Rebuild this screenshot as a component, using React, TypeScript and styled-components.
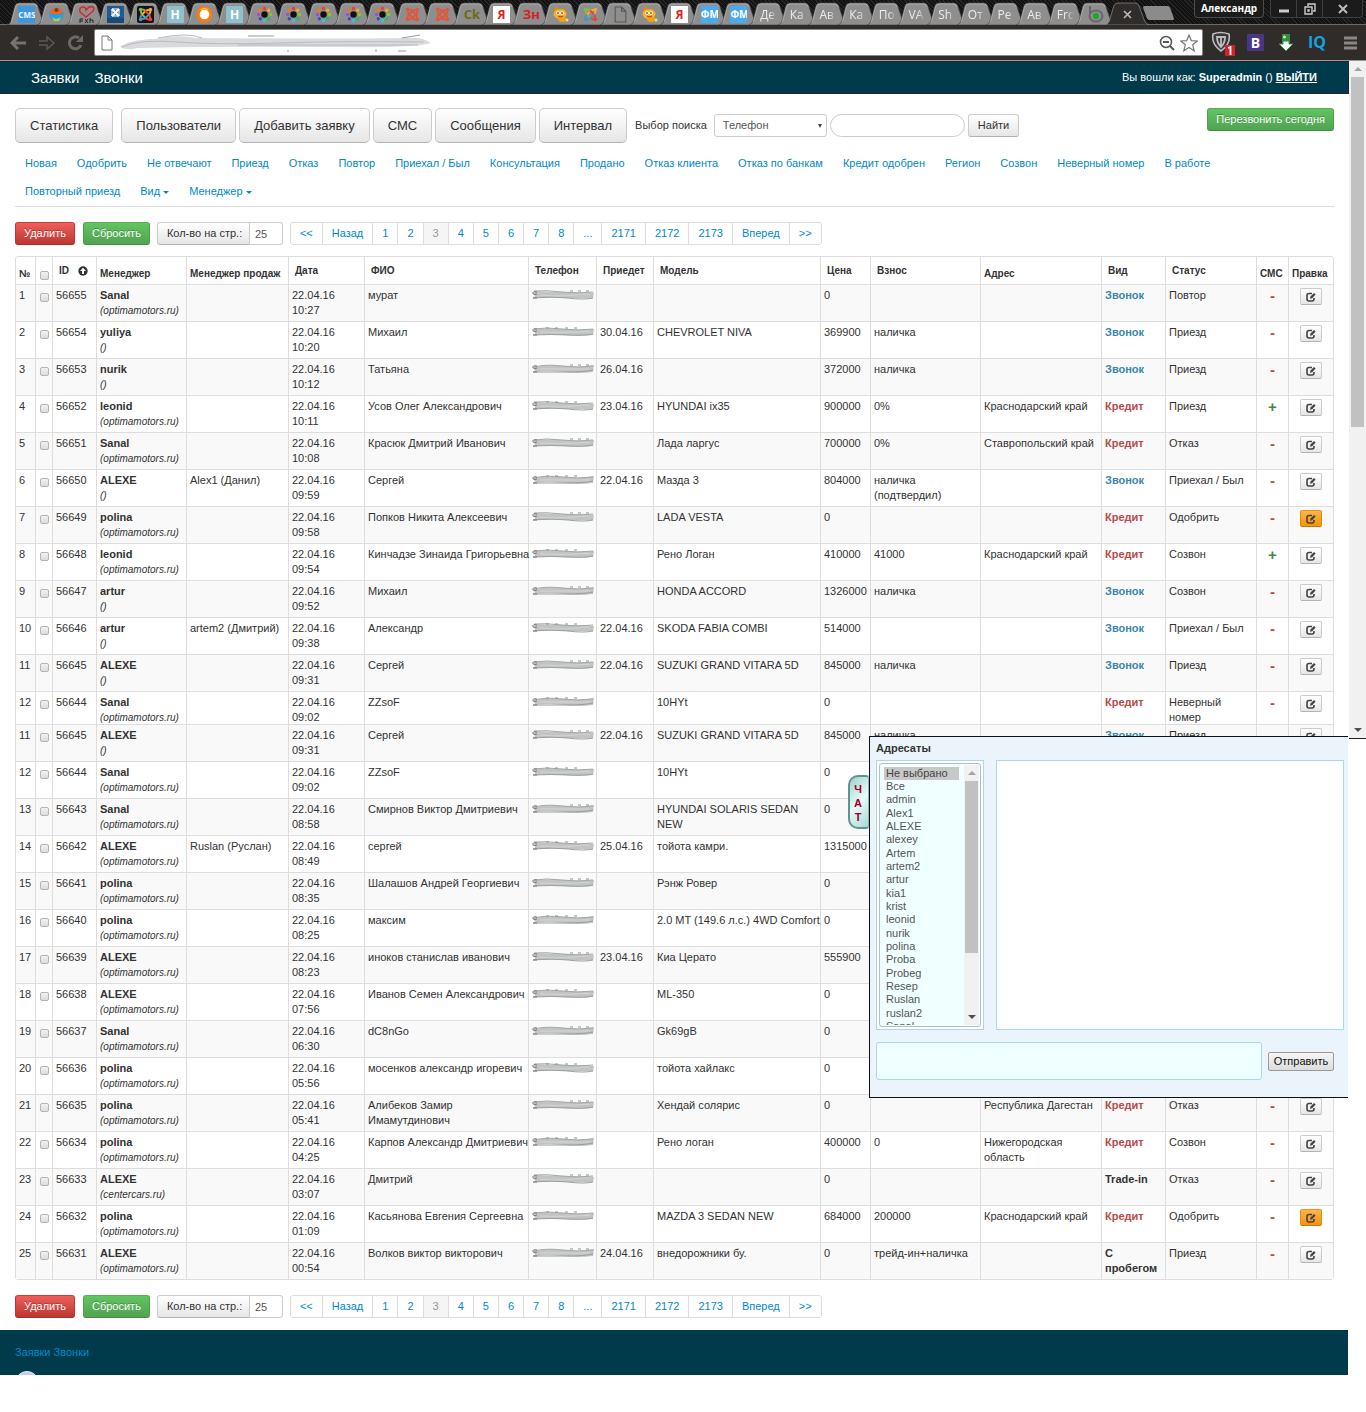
import React from "react";
import styled, { createGlobalStyle, css } from "styled-components";

const GlobalStyle = createGlobalStyle`
  *, *::before, *::after { box-sizing: border-box; }
  html, body { margin: 0; background: #fff; }
  body, button, input, select, textarea {
    font-family: "Liberation Sans", Arial, sans-serif;
    font-size: 11px;
    line-height: 15px;
    color: #333;
  }
  a { color: #0088cc; text-decoration: none; }
`;

/* ---------- browser frame ---------- */

const Browser = styled.header`
  background: #302c2a;
  border-bottom: 1px solid #9a9a9a;
`;

const TabStrip = styled.div`
  display: flex;
  height: 25px;
  padding: 0 3px 0 12px;
  background: repeating-linear-gradient(45deg, #121212 0 2px, #262626 2px 3px);
  border-bottom: 1px solid #6d6a68;
`;

const TabList = styled.div`
  display: flex;
  flex: 1;
  min-width: 0;
`;

const Tab = styled.button`
  position: relative;
  flex: 1 1 0;
  min-width: 0;
  height: 25px;
  padding: 3px 0 0;
  border: 0;
  background: none;
  display: flex;
  align-items: center;
  justify-content: center;
`;

const TabShape = styled.svg`
  position: absolute;
  top: 2px;
  left: -5px;
  width: calc(100% + 10px);
  height: 23px;
`;

const TabFace = styled.span`
  position: relative;
  display: flex;
  justify-content: center;
  width: 17px;
  height: 17px;
  overflow: hidden;
  svg { width: 17px; height: 17px; }
`;

const TabText = styled.span<{ $color?: string; $bg?: string; $size?: number; $fade?: boolean }>`
  width: 17px;
  text-align: ${(p) => (p.$fade ? "left" : "center")};
  white-space: nowrap;
  font: ${(p) => (p.$fade ? "normal" : "bold")} ${(p) => p.$size ?? 12}px/17px "Open Sans", "Noto Sans", sans-serif;
  color: ${(p) => p.$color ?? "#ececec"};
  background: ${(p) => p.$bg ?? "transparent"};
  ${(p) => p.$fade && css`mask-image: linear-gradient(90deg, #000 60%, transparent);`}
`;

const WindowBar = styled.div`
  display: flex;
  align-items: flex-start;
  flex: none;
`;

const ActiveTab = styled(Tab)`
  flex: none;
  width: 34px;
`;

const NewTab = styled.button`
  width: 27px;
  height: 14px;
  margin: 6px 22px 0 1px;
  border: 0;
  background: #8b8b8b;
  border-radius: 2px;
  transform: skewX(20deg);
`;

const UserButton = styled.button`
  width: 70px;
  height: 18px;
  padding: 0;
  border: 1px solid #4b4b4b;
  border-top: 0;
  border-radius: 0 0 4px 4px;
  background: #1b1b1b;
  color: #fff;
  font: bold 10px/17px "Open Sans", "Noto Sans", sans-serif;
`;

const WindowControls = styled.div`
  display: flex;
  margin-left: 6px;
  border: 1px solid #3f3f3f;
  border-top: 0;
  border-radius: 0 0 4px 4px;
  background: #1b1b1b;
`;

const WindowButton = styled.button<{ $w: number }>`
  display: flex;
  align-items: center;
  justify-content: center;
  width: ${(p) => p.$w}px;
  height: 17px;
  padding: 0;
  border: 0;
  background: none;
  & + & { border-left: 1px solid #3f3f3f; }
`;

const AddressBar = styled.div`
  display: flex;
  align-items: center;
  height: 35px;
  padding: 0 5px 0 8px;
`;

const BarIcons = styled.div<{ $gap: number }>`
  display: flex;
  align-items: center;
  gap: ${(p) => p.$gap}px;
`;

const IconButton = styled.button`
  display: flex;
  padding: 0;
  border: 0;
  background: none;
`;

const Omnibox = styled.div`
  display: flex;
  align-items: center;
  flex: 1;
  height: 27px;
  margin: 0 8px;
  padding: 0 4px 0 6px;
  gap: 5px;
  background: #fff;
  border: 1px solid #888;
  border-radius: 2px;
`;

const UrlWrap = styled.div`
  display: flex;
  align-items: center;
  flex: 1;
`;

/* ---------- page ---------- */

const Viewport = styled.div`
  display: flex;
  align-items: flex-start;
`;

const Page = styled.div`
  position: relative;
  flex: 1;
  min-width: 0;
`;

const Navbar = styled.nav`
  display: flex;
  align-items: center;
  height: 33px;
  padding: 0 31px;
  gap: 15px;
  background: #003b4b;
  border: 1px solid #252525;
  border-width: 1px 1px 1px 0;
  a { color: #fff; font-size: 15px; line-height: 20px; }
`;

const Login = styled.p`
  margin: 0 0 0 auto;
  color: #fff;
  a { font-size: 11px; font-weight: bold; line-height: 15px; text-decoration: underline; }
`;

const Content = styled.main`
  padding: 14px 15px 1px;
`;

const TopBar = styled.div`
  display: flex;
  align-items: center;
  height: 35px;
`;

const tones = {
  plain: css`
    color: #333;
    border-color: #ccc #ccc #b3b3b3;
    background: linear-gradient(#fff, #e6e6e6);
  `,
  red: css`
    color: #fff;
    border-color: #c9403a #b93a34 #a32f2a;
    background: linear-gradient(#ee5f5b, #bd362f);
    text-shadow: 0 -1px 0 rgba(0, 0, 0, 0.25);
  `,
  green: css`
    color: #fff;
    border-color: #55ad55 #4da04d #3f8f3f;
    background: linear-gradient(#62c462, #51a351);
    text-shadow: 0 -1px 0 rgba(0, 0, 0, 0.25);
  `,
  orange: css`
    color: #333;
    border-color: #e8961c #e08a10 #c87a08;
    background: linear-gradient(#fbb450, #f89406);
  `,
};

const Button = styled.button<{ $tone?: keyof typeof tones }>`
  height: 23px;
  padding: 0 8px;
  border: 1px solid;
  border-radius: 3px;
  white-space: nowrap;
  ${(p) => tones[p.$tone ?? "plain"]}
`;

const LargeButton = styled(Button)`
  height: 35px;
  padding: 0 14px;
  margin-right: 3px;
  border-radius: 5px;
  font-size: 13px;
  line-height: 20px;
  &:first-child { margin-right: 8px; }
`;

const SearchForm = styled.form`
  display: flex;
  align-items: center;
  gap: 3px;
  margin-left: 5px;
  label { margin-right: 4px; white-space: nowrap; }
  button { padding: 0 9px; }
`;

const SelectWrap = styled.span`
  position: relative;
  display: flex;
  &::after {
    content: "";
    position: absolute;
    top: 10px;
    right: 5px;
    border: 2px solid transparent;
    border-top: 4px solid #444;
    border-bottom: 0;
    pointer-events: none;
  }
`;

const Select = styled.select`
  appearance: none;
  width: 113px;
  height: 23px;
  padding: 0 8px;
  border: 1px solid #ccc;
  border-radius: 3px;
  background: #fff;
  color: #555;
`;

const SearchInput = styled.input`
  width: 135px;
  height: 23px;
  padding: 0 10px;
  border: 1px solid #ccc;
  border-radius: 12px;
  background: #fff;
`;

const CallToday = styled(Button)`
  align-self: flex-start;
  margin-left: auto;
`;

const Filters = styled.ul`
  display: flex;
  flex-wrap: wrap;
  margin: 6px 0 0;
  padding: 0 80px 1px 0;
  list-style: none;
  border-bottom: 1px solid #ddd;
  a { display: block; padding: 0 10px; line-height: 28px; }
`;

const Caret = styled.i`
  display: inline-block;
  margin-left: 3px;
  vertical-align: middle;
  border: 3px solid transparent;
  border-top-color: #0088cc;
  border-bottom: 0;
`;

const Tools = styled.div`
  display: flex;
  align-items: center;
  height: 23px;
  margin: 15px 0 11px;
`;

const ToolGroup = styled.div`
  display: flex;
  gap: 8px;
`;

const PerPage = styled.div`
  display: flex;
  margin: 0 7px;
  label {
    display: block;
    width: 93px;
    height: 23px;
    padding-left: 9px;
    line-height: 21px;
    white-space: nowrap;
    border: 1px solid;
    border-radius: 3px 0 0 3px;
    ${tones.plain}
  }
  input {
    width: 33px;
    height: 23px;
    padding: 0 5px;
    border: 1px solid #ccc;
    border-left: 0;
    border-radius: 0 3px 3px 0;
    color: #555;
  }
`;

const Pager = styled.ul`
  display: flex;
  margin: 0;
  padding: 0;
  list-style: none;
  border: 1px solid #ddd;
  border-radius: 3px;
  li + li { border-left: 1px solid #ddd; }
`;

const PageLink = styled.a<{ $active?: boolean }>`
  display: block;
  padding: 0 9px;
  line-height: 21px;
  ${(p) => p.$active && css`color: #999; background: #f5f5f5;`}
`;

/* ---------- table ---------- */

const Grid = styled.table`
  width: 100%;
  table-layout: fixed;
  border: 1px solid #ddd;
  border-radius: 3px;
  border-spacing: 0;
  th, td { padding: 3px 0 3px 3px; vertical-align: top; text-align: left; }
  th + th, td + td { border-left: 1px solid #ddd; }
  th { vertical-align: bottom; white-space: nowrap; font-size: 10px; }
  th a { display: block; padding: 3px; color: #333; }
  td { border-top: 1px solid #ddd; }
  em { font-size: 10px; }
  tbody tr:nth-child(odd) { background: #f9f9f9; }
`;

const Col = styled.col<{ $w?: number }>`
  width: ${(p) => (p.$w ? `${p.$w}px` : "auto")};
`;

const Row = styled.tr<{ $cut: boolean }>`
  ${(p) => p.$cut && css`
    && td { padding-bottom: 0; }
    td > div { height: 29px; overflow: hidden; }
  `}
`;

const Cell = styled.div<{ $center?: boolean }>`
  ${(p) => p.$center && css`text-align: center; margin-left: -3px;`}
`;

const Name = styled.span`
  white-space: pre;
`;

const Check = styled.input.attrs({ type: "checkbox" })`
  appearance: none;
  display: block;
  width: 9px;
  height: 9px;
  margin: 5px 0 0 1px;
  border: 1px solid #b4b4b4;
  border-radius: 2px;
  background: linear-gradient(#f2f2f2, #dcdcdc);
`;

const HeadCheck = styled(Check)`
  margin: 0 0 1px 1px;
`;

const SortLabel = styled.span`
  display: flex;
  align-items: center;
  gap: 9px;
`;

const Kind = styled.strong<{ $kind: string }>`
  color: ${(p) => (p.$kind === "Звонок" ? "#3a87ad" : p.$kind === "Кредит" ? "#b94a48" : "#333")};
`;

const Sms = styled.strong<{ $sent: boolean }>`
  font-size: 15px;
  color: ${(p) => (p.$sent ? "#468847" : "#b94a48")};
`;

const EditButton = styled(Button)`
  display: inline-flex;
  align-items: center;
  justify-content: center;
  width: 22px;
  height: 17px;
  padding: 0;
  border-radius: 2px;
  vertical-align: top;
`;

/* ---------- chat ---------- */

const Chat = styled.section`
  position: absolute;
  top: 675px;
  right: 1px;
  width: 479px;
  height: 362px;
  padding: 4px 4px 0 6px;
  background: #ebf3fb;
  border: 1px solid #111;
  border-right: 0;
`;

const ChatTitle = styled.label`
  display: block;
  font-weight: bold;
`;

const ChatBody = styled.div`
  display: flex;
  gap: 12px;
  height: 270px;
  margin-top: 4px;
`;

const Recipients = styled.div`
  width: 108px;
  padding: 2px;
  border: 1px solid #a8d8ea;
  background: #fff;
`;

const RecipientBox = styled.div`
  display: flex;
  height: 264px;
  padding: 1px;
  border: 1px solid #bbb;
  border-radius: 3px;
  background: #f0ffff;
`;

const RecipientList = styled.select`
  appearance: none;
  flex: 1;
  min-width: 0;
  height: 260px;
  padding: 2px 5px 0 3px;
  border: 0;
  outline: 0;
  background: #f0ffff;
  color: #555;
  overflow: hidden;
  scrollbar-width: none;
  option { min-height: 13px; padding: 0 2px; color: #555; }
  option:nth-child(3n) { min-height: 14px; }
  option:checked { color: #444; background: #c8c8c8; }
`;

const Messages = styled.div`
  flex: 1;
  border: 1px solid #a8d8ea;
  background: #fff;
`;

const Compose = styled.div`
  display: flex;
  align-items: center;
  gap: 6px;
  margin: 12px 10px 0 0;
  textarea {
    flex: 1;
    height: 38px;
    border: 1px solid #a8d8ea;
    border-radius: 3px;
    background: #f0ffff;
    resize: none;
  }
`;

const Send = styled.button`
  width: 66px;
  height: 19px;
  padding: 0;
  border: 1px solid #9a9a9a;
  border-radius: 2px;
  background: linear-gradient(#f6f6f6, #dcdcdc);
  color: #111;
`;

const ChatHandle = styled.button`
  position: absolute;
  top: 714px;
  right: 480px;
  width: 21px;
  height: 54px;
  padding: 2px 2px 0 0;
  border: 2px solid #5f9591;
  border-right: 1px solid #8fb8b5;
  border-radius: 10px 3px 3px 10px;
  background: linear-gradient(135deg, #9fd0cc, #e8fbfa 50%, #a9d8d4);
  color: #a00020;
  font-weight: bold;
  line-height: 14px;
  span { display: block; }
`;

/* ---------- scrollbars, footer ---------- */

const Scrollbar = styled.div<{ $w: number; $h: number }>`
  display: flex;
  flex-direction: column;
  align-items: center;
  flex: none;
  width: ${(p) => p.$w}px;
  height: ${(p) => p.$h}px;
  background: #f1f1f1;
`;

const PageScrollbar = styled(Scrollbar)`
  border-bottom: 1px solid #222;
`;

const Arrow = styled.i<{ $up?: boolean }>`
  margin: 6px 0;
  border: 4px solid transparent;
  ${(p) => (p.$up ? css`border-bottom-color: #a3a3a3; border-top: 0;` : css`border-top-color: #505050; border-bottom: 0; margin-top: auto;`)}
`;

const Thumb = styled.div<{ $h: number }>`
  width: 13px;
  height: ${(p) => p.$h}px;
  background: #c1c1c1;
`;

const Footer = styled.footer`
  height: 45px;
  margin-right: 1px;
  padding: 15px 15px 0;
  background: #003b4b;
  overflow: hidden;
`;

const Counter = styled.div`
  width: 24px;
  height: 24px;
  margin-top: 11px;
  border-radius: 12px;
  background: #c3cfe4;
  border: 1px solid #e8eef8;
`;

/* ---------- drawings ---------- */

const SmudgeArt = styled.svg`
  display: block;
  margin-top: 1px;
`;

const Smudge = ({ n }: { n: number }) => {
  const shift = (n % 3) - 1;
  return (
    <SmudgeArt width="63" height="12" viewBox="0 0 63 12">
      <path d={`M2 ${3 + shift} Q18 ${2 - shift} 34 3 T62 ${3 - shift} L61 9 Q46 ${10 + shift} 30 9 T3 9 Z`} fill="#c2c4c4" />
      <path d={`M2 ${3 + shift} Q14 1 30 3 T61 3`} fill="none" stroke="#a4a7a7" />
      <path d={`M1 9 Q20 ${8 + shift} 36 9 T61 ${8 - shift}`} fill="none" stroke="#9a9e9e" />
      <path d={`M8 6 Q28 ${7 - shift} 42 6 T58 6`} fill="none" stroke="#d4d6d6" />
      <path d="M5 3 Q0 2 1 5 Q3 6 5 5 M1 9 H5" fill="none" stroke="#777" />
      <path d={n % 2 ? "M14 2 H17 M23 2 H26 M33 2 H36 M42 2 H45" : "M38 2 H41 M46 2 H49 M54 2 H57"} stroke="#909393" />
    </SmudgeArt>
  );
};

const EditIcon = () => (
  <svg width="10" height="10" viewBox="0 0 10 10" fill="none">
    <path d="M6 1.5H3Q1 1.5 1 3.5V7Q1 9 3 9H6Q8 9 8 7V6" stroke="#444" strokeWidth="1.6" />
    <path d="M4 6.8L4.5 4.6L8 1L9.6 2.5L6.2 6.2Z" fill="#444" />
  </svg>
);

const SortIcon = () => (
  <svg width="10" height="10" viewBox="0 0 10 10">
    <circle cx="5" cy="5" r="4.7" fill="#333" />
    <path d="M5 1.7L8 5H6V8H4V5H2Z" fill="#fff" />
  </svg>
);

const Spinner = () => (
  <svg viewBox="0 0 17 17">
    {["#f33", "#fa2", "#8c2", "#2b6", "#2cd", "#44c", "#a4d", "#f70"].map((c, i) => (
      <rect key={c} x="7" y="1" width="3" height="3" rx="1" fill={c} transform={`rotate(${i * 45} 8.5 8.5)`} />
    ))}
    <circle cx="8.5" cy="8.5" r="3.2" fill="#111" />
  </svg>
);

const Joomla = ({ colors, bg }: { colors: string[]; bg?: string }) => (
  <svg viewBox="0 0 17 17">
    {bg && <rect width="17" height="17" rx="2" fill={bg} />}
    {[0, 1, 2, 3].map((i) => (
      <g key={i} transform={`rotate(${i * 90} 8.5 8.5)`} stroke={colors[i]} fill={colors[i]}>
        <circle cx="3.6" cy="3.6" r="1.8" stroke="none" />
        <path d="M4 4V6Q4 7.5 5.5 9L9 12.5M5 3.6Q7 3.4 8.5 5" fill="none" strokeWidth="2" />
      </g>
    ))}
  </svg>
);

const JoomlaBlue = () => (
  <svg viewBox="0 0 17 17">
    <rect width="17" height="17" fill="#1d5b94" />
    <rect y="12" width="17" height="5" fill="#174a79" />
    <path d="M5 3L12 10M12 3L5 10" stroke="#fff" strokeWidth="2.4" />
    <path d="M5 3H12V10H5Z" fill="none" stroke="#fff" />
  </svg>
);

const Ball = () => (
  <svg viewBox="0 0 17 17">
    <circle cx="8.5" cy="8" r="6.5" fill="#e8652c" />
    <path d="M1 6Q5 9 8.5 8Q13 9 16 6L15 12Q8 18 2 12Z" fill="#2f9bd8" />
    <path d="M4 11Q8 15 13 11L11 15H6Z" fill="#a8d35a" />
    <circle cx="8.5" cy="4" r="2" fill="#7d3a1a" />
  </svg>
);

const Heart = () => (
  <svg viewBox="0 0 17 17">
    <path d="M8 11L2 6Q1 1 5 1Q8 1 8 4Q11 0 15 1Q17 3 14 6Z" fill="none" stroke="#e0202a" strokeWidth="1.4" />
    <path d="M2 13H5M2 15H5M2 13V17M7 13L10 17M10 13L7 17M12 12V17M12 14H15V17" stroke="#222" fill="none" />
  </svg>
);

const Ring = () => (
  <svg viewBox="0 0 17 17">
    <circle cx="8.5" cy="8.5" r="6.4" fill="#fff" stroke="#ff7a0a" strokeWidth="3.2" />
    <path d="M5 4Q8 1 12 4" stroke="#ffc02a" strokeWidth="1.5" fill="none" />
  </svg>
);

const Cat = () => (
  <svg viewBox="0 0 17 17">
    <path d="M2 5L4 0L8 4Z M9 4L12 2L13 6Z" fill="#e58a16" />
    <ellipse cx="8" cy="8" rx="6.5" ry="4.8" fill="#f9b424" />
    <ellipse cx="10" cy="13" rx="4" ry="3" fill="#f3a11b" />
    <circle cx="6" cy="7" r="1.8" fill="#fff" />
    <circle cx="10" cy="7" r="1.8" fill="#fff" />
    <circle cx="6" cy="7" r="0.8" />
    <circle cx="10" cy="7" r="0.8" />
    <path d="M6 10Q8 12 11 10" stroke="#a33" fill="none" />
    <circle cx="15" cy="14" r="1.5" fill="#ffe14a" />
  </svg>
);

const SheetIcon = ({ dark }: { dark?: boolean }) => (
  <svg width="12" height="16" viewBox="0 0 12 16">
    <path d="M1 1H7L11 5V15H1Z M7 1V5H11" fill={dark ? "none" : "#fff"} stroke={dark ? "#555" : "#777"} />
  </svg>
);

const Bo = () => (
  <svg viewBox="0 0 17 17">
    <path d="M3 0V8" stroke="#6b5f72" strokeWidth="2" />
    <ellipse cx="9" cy="10" rx="6.5" ry="5.5" fill="none" stroke="#6b6570" strokeWidth="2" />
    <circle cx="9" cy="10" r="3" fill="#14b01a" />
  </svg>
);

const Shape = ({ active }: { active?: boolean }) => (
  <TabShape viewBox="0 0 40 23" preserveAspectRatio="none">
    <path
      d="M0 23Q3 22 4 19L8 4Q9 1 12 1H27Q30 1 31 4L36 19Q37 22 40 23Z"
      fill={active ? "#302c2a" : "#8e8e8e"}
      stroke={active ? "#8a8a8a" : "#4a4a4a"}
      strokeWidth="0.7"
    />
    {!active && <path d="M4.500 20L8.500 5Q9.500 2 12 2H27Q29.500 2 30.500 5" fill="none" stroke="#b2b2b2" strokeWidth="0.8" />}
  </TabShape>
);

const orange = ["#e2573a", "#e2573a", "#e2573a", "#e2573a"];
const multi = ["#7ac143", "#f9a541", "#f44321", "#5091cd"];

const tabFaces: React.ReactNode[] = [
  <TabText $color="#e9f5ff" $bg="#3e97dc" $size={8}>CMS</TabText>,
  <Ball />,
  <Heart />,
  <JoomlaBlue />,
  <Joomla colors={multi} bg="#151515" />,
  <TabText $color="#fff" $bg="#8fc0d0">H</TabText>,
  <Ring />,
  <TabText $color="#fff" $bg="#8fc0d0">H</TabText>,
  <Spinner />, <Spinner />, <Spinner />, <Spinner />, <Spinner />,
  <Joomla colors={orange} />,
  <Joomla colors={orange} />,
  <TabText $color="#6e6b17" $size={13}>Ck</TabText>,
  <TabText $color="#e02020" $bg="#fff">Я</TabText>,
  <TabText $color="#d81e1e" $size={13}>Зн</TabText>,
  <Cat />,
  <Joomla colors={multi} />,
  <SheetIcon dark />,
  <Cat />,
  <TabText $color="#e02020" $bg="#fff">Я</TabText>,
  <TabText $color="#fff" $bg="#4aaaf0" $size={10}>ФМ</TabText>,
  <TabText $color="#fff" $bg="#4aaaf0" $size={10}>ФМ</TabText>,
  ...["Де", "Ка", "Ав", "Ка", "По", "VA", "Sh", "От", "Ре", "Ав", "Fro"].map((t) => <TabText $fade>{t}</TabText>),
  <Bo />,
];

/* ---------- data ---------- */

type Lead = [number, string, string, string, string, string, string, string, string, string, string, string, string, string, string];
// №, менеджер, сайт, менеджер продаж, время, ФИО, приедет, модель, цена, взнос, адрес, вид, статус, смс, правка
const O = "optimamotors.ru";
const leads: Lead[] = [
  [1, "Sanal", O, "", "10:27", "мурат", "", "", "0", "", "", "Звонок", "Повтор", "-", ""],
  [2, "yuliya", "", "", "10:20", "Михаил", "30.04.16", "CHEVROLET NIVA", "369900", "наличка", "", "Звонок", "Приезд", "-", ""],
  [3, "nurik", "", "", "10:12", "Татьяна", "26.04.16", "", "372000", "наличка", "", "Звонок", "Приезд", "-", ""],
  [4, "leonid", O, "", "10:11", "Усов Олег Александрович", "23.04.16", "HYUNDAI ix35", "900000", "0%", "Краснодарский край", "Кредит", "Приезд", "+", ""],
  [5, "Sanal", O, "", "10:08", "Красюк Дмитрий Иванович", "", "Лада ларгус", "700000", "0%", "Ставропольский край", "Кредит", "Отказ", "-", ""],
  [6, "ALEXE", "", "Alex1 (Данил)", "09:59", "Сергей", "22.04.16", "Мазда 3", "804000", "наличка (подтвердил)", "", "Звонок", "Приехал / Был", "-", ""],
  [7, "polina", O, "", "09:58", "Попков Никита Алексеевич", "", "LADA VESTA", "0", "", "", "Кредит", "Одобрить", "-", "hot"],
  [8, "leonid", O, "", "09:54", "Кинчадзе Зинаида Григорьевна", "", "Рено Логан", "410000", "41000", "Краснодарский край", "Кредит", "Созвон", "+", ""],
  [9, "artur", "", "", "09:52", "Михаил", "", "HONDA ACCORD", "1326000", "наличка", "", "Звонок", "Созвон", "-", ""],
  [10, "artur", "", "artem2 (Дмитрий)", "09:38", "Александр", "22.04.16", "SKODA FABIA COMBI", "514000", "", "", "Звонок", "Приехал / Был", "-", ""],
  [11, "ALEXE", "", "", "09:31", "Сергей", "22.04.16", "SUZUKI GRAND VITARA 5D", "845000", "наличка", "", "Звонок", "Приезд", "-", ""],
  [12, "Sanal", O, "", "09:02", "ZZsoF", "", "10HYt", "0", "", "", "Кредит", "Неверный номер", "-", ""],
  [13, "Sanal", O, "", "08:58", "Смирнов Виктор Дмитриевич", "", "HYUNDAI SOLARIS SEDAN NEW", "0", "", "", "Звонок", "Приезд", "-", ""],
  [14, "ALEXE", O, "Ruslan (Руслан)", "08:49", "сергей", "25.04.16", "тойота камри.", "1315000", "", "", "Звонок", "Приезд", "-", ""],
  [15, "polina", O, "", "08:35", "Шалашов Андрей Георгиевич", "", "Рэнж Ровер", "0", "", "", "Кредит", "Отказ", "-", ""],
  [16, "polina", O, "", "08:25", "максим", "", "2.0 MT (149.6 л.с.) 4WD Comfort", "0", "", "", "Кредит", "Отказ", "-", ""],
  [17, "ALEXE", O, "", "08:23", "иноков станислав иванович", "23.04.16", "Киа Церато", "555900", "", "", "Кредит", "Приезд", "-", ""],
  [18, "ALEXE", O, "", "07:56", "Иванов Семен Александрович", "", "ML-350", "0", "", "", "Кредит", "Отказ", "-", ""],
  [19, "Sanal", O, "", "06:30", "dC8nGo", "", "Gk69gB", "0", "", "", "Кредит", "Отказ", "-", ""],
  [20, "polina", O, "", "05:56", "мосенков александр игоревич", "", "тойота хайлакс", "0", "", "", "Кредит", "Отказ", "-", ""],
  [21, "polina", O, "", "05:41", "Алибеков Замир\nИмамутдинович", "", "Хендай солярис", "0", "", "Республика Дагестан", "Кредит", "Отказ", "-", ""],
  [22, "polina", O, "", "04:25", "Карпов Александр Дмитриевич", "", "Рено логан", "400000", "0", "Нижегородская область", "Кредит", "Созвон", "-", ""],
  [23, "ALEXE", "centercars.ru", "", "03:07", "Дмитрий", "", "", "0", "", "", "Trade-in", "Отказ", "-", ""],
  [24, "polina", O, "", "01:09", "Касьянова Евгения Сергеевна", "", "MAZDA 3 SEDAN NEW", "684000", "200000", "Краснодарский край", "Кредит", "Одобрить", "-", "hot"],
  [25, "ALEXE", O, "", "00:54", "Волков виктор викторович", "24.04.16", "внедорожники бу.", "0", "трейд-ин+наличка", "", "С пробегом", "Приезд", "-", ""],
];
const shown = [...leads.slice(0, 12), ...leads.slice(10)];

const colWidths = [19, 17, 44, 90, 102, 76, 164, 68, 57, 0, 50, 110, 121, 64, 91, 32, 45];
const filters = ["Новая", "Одобрить", "Не отвечают", "Приезд", "Отказ", "Повтор", "Приехал / Был", "Консультация", "Продано", "Отказ клиента", "Отказ по банкам", "Кредит одобрен", "Регион", "Созвон", "Неверный номер", "В работе", "Повторный приезд"];
const pages = ["<<", "Назад", "1", "2", "3", "4", "5", "6", "7", "8", "...", "2171", "2172", "2173", "Вперед", ">>"];
const people = ["Не выбрано", "Все", "admin", "Alex1", "ALEXE", "alexey", "Artem", "artem2", "artur", "kia1", "krist", "leonid", "nurik", "polina", "Proba", "Probeg", "Resep", "Ruslan", "ruslan2", "Sanal"];

const Toolbar = ({ id }: { id: string }) => (
  <Tools>
    <ToolGroup>
      <Button $tone="red">Удалить</Button>
      <Button $tone="green">Сбросить</Button>
    </ToolGroup>
    <PerPage>
      <label htmlFor={id}>Кол-во на стр.:</label>
      <input id={id} defaultValue="25" />
    </PerPage>
    <Pager>
      {pages.map((p) => (
        <li key={p}><PageLink href="#" $active={p === "3"}>{p}</PageLink></li>
      ))}
    </Pager>
  </Tools>
);

const LeadRow = ({ lead, cut, seed }: { lead: Lead; cut: boolean; seed: number }) => {
  const [n, manager, site, seller, time, name, visit, model, price, deposit, address, kind, status, sms, hot] = lead;
  const cell = (content: React.ReactNode, center = false) => (
    <td><Cell $center={center}>{content}</Cell></td>
  );
  return (
    <Row $cut={cut}>
      {cell(n)}
      {cell(<Check aria-label={`Выбрать ${n}`} />)}
      {cell(56656 - n)}
      {cell(<><strong>{manager}</strong><br /><em>({site})</em></>)}
      {cell(seller)}
      {cell(<>22.04.16<br />{time}</>)}
      {cell(<Name>{name}</Name>)}
      {cell(<Smudge n={seed} />)}
      {cell(visit)}
      {cell(model)}
      {cell(price)}
      {cell(deposit)}
      {cell(address)}
      {cell(<Kind $kind={kind}>{kind}</Kind>)}
      {cell(status)}
      {cell(<Sms $sent={sms === "+"}>{sms}</Sms>, true)}
      {cell(<EditButton $tone={hot ? "orange" : "plain"} aria-label="Правка"><EditIcon /></EditButton>, true)}
    </Row>
  );
};

const SortHead = ({ children }: { children: React.ReactNode }) => <th><a href="#">{children}</a></th>;

export default function App() {
  return (
    <>
      <GlobalStyle />
      <Browser>
        <TabStrip>
          <TabList>
            {tabFaces.map((face, i) => (
              <Tab key={i}><Shape /><TabFace>{face}</TabFace></Tab>
            ))}
          </TabList>
          <WindowBar>
            <ActiveTab aria-label="Закрыть вкладку">
              <Shape active />
              <TabFace><svg viewBox="0 0 17 17"><path d="M5 5L12 12M12 5L5 12" stroke="#bbb" strokeWidth="1.6" /></svg></TabFace>
            </ActiveTab>
            <NewTab aria-label="Новая вкладка" />
            <UserButton>Александр</UserButton>
            <WindowControls>
              <WindowButton $w={25} aria-label="Свернуть"><svg width="12" height="10"><path d="M1 7H11" stroke="#ccc" strokeWidth="3" /></svg></WindowButton>
              <WindowButton $w={26} aria-label="Развернуть"><svg width="12" height="12" fill="none" stroke="#ccc" strokeWidth="1.4"><path d="M4 3V1H11V8H9" /><path d="M1 4H8V11H1Z M4 7H5V8H4Z" /></svg></WindowButton>
              <WindowButton $w={40} aria-label="Закрыть"><svg width="10" height="10"><path d="M1 1L9 9M9 1L1 9" stroke="#bbb" strokeWidth="2" /></svg></WindowButton>
            </WindowControls>
          </WindowBar>
        </TabStrip>
        <AddressBar>
          <BarIcons $gap={9}>
            <IconButton aria-label="Назад"><svg width="20" height="20" fill="none" stroke="#747474" strokeWidth="3"><path d="M18 10H5M10 4L4 10L10 16" /></svg></IconButton>
            <IconButton aria-label="Вперед"><svg width="20" height="20" fill="none" stroke="#5b5856" strokeWidth="1.5"><path d="M2 8H10V4L17 10L10 16V12H2" /></svg></IconButton>
            <IconButton aria-label="Обновить"><svg width="20" height="20" fill="none" stroke="#6b6866" strokeWidth="3"><path d="M15 12A6 6 0 1 1 13 5" /><path d="M17 2V9H10Z" fill="#6b6866" stroke="none" /></svg></IconButton>
          </BarIcons>
          <Omnibox>
            <SheetIcon />
            <UrlWrap>
              <svg width="316" height="22" viewBox="0 0 316 22">
                <path d="M2 15Q10 8 36 7Q60 2 78 6Q200 7 290 6Q304 5 313 11Q300 16 220 15Q100 14 20 16Q8 19 2 15Z" fill="#d9dadc" />
                <path d="M4 15Q20 7 60 10T160 11T306 10M40 6Q70 0 84 6M120 13H300" fill="none" stroke="#b9bac0" />
                <path d="M130 4H156M284 6L302 3M170 18V20M258 17V20M280 19H288" stroke="#999" />
              </svg>
            </UrlWrap>
            <IconButton aria-label="Масштаб"><svg width="16" height="16" fill="none" stroke="#555" strokeWidth="1.5"><circle cx="7" cy="7" r="5.5" /><path d="M11 11L15 15M4 7H10" strokeWidth="2" /></svg></IconButton>
            <IconButton aria-label="В закладки"><svg width="18" height="18" fill="none" stroke="#777" strokeWidth="1.2"><path d="M9 1L11.3 6.6L17.3 7L12.7 10.8L14.2 16.8L9 13.5L3.8 16.8L5.3 10.8L0.7 7L6.7 6.6Z" /></svg></IconButton>
          </Omnibox>
          <BarIcons $gap={12}>
            <IconButton aria-label="Защита"><svg width="24" height="26" viewBox="0 0 24 26"><path d="M2 4Q9 1 18 4Q20 14 10 21Q0 14 2 4Z" fill="#3a3736" stroke="#bdbdbd" strokeWidth="1.6" /><path d="M6 7H14Q14 13 10 17Q6 13 6 7Z M10 7V16" fill="none" stroke="#bdbdbd" strokeWidth="1.8" /><rect x="14" y="15" width="10" height="11" rx="1" fill="#d2232a" /><path d="M17 18L19.500 17V25" stroke="#fff" strokeWidth="1.8" fill="none" /></svg></IconButton>
            <IconButton><TabText $bg="#4b3585" $color="#fff" $size={14}>B</TabText></IconButton>
            <IconButton aria-label="Загрузки"><svg width="20" height="20"><rect x="6" y="1" width="8" height="9" fill="#2f8f3c" /><path d="M7 8H13V11H17L10 18L3 11H7Z" fill="#fff" stroke="#2f8f3c" /><circle cx="8.500" cy="4" r="1.500" fill="#bfe8c2" /></svg></IconButton>
            <IconButton><TabText $color="#12a4dc" $size={16}>IQ</TabText></IconButton>
            <IconButton aria-label="Меню"><svg width="24" height="18"><path d="M7 4H20M7 9H20M7 14H20" stroke="#8a8785" strokeWidth="3" /></svg></IconButton>
          </BarIcons>
        </AddressBar>
      </Browser>

      <Viewport>
        <Page>
          <Navbar>
            <a href="#">Заявки</a>
            <a href="#">Звонки</a>
            <Login>Вы вошли как: <strong>Superadmin</strong> () <a href="#">ВЫЙТИ</a></Login>
          </Navbar>
          <Content>
            <TopBar>
              {["Статистика", "Пользователи", "Добавить заявку", "СМС", "Сообщения", "Интервал"].map((t) => (
                <LargeButton key={t}>{t}</LargeButton>
              ))}
              <SearchForm>
                <label htmlFor="field">Выбор поиска</label>
                <SelectWrap><Select id="field"><option>Телефон</option></Select></SelectWrap>
                <SearchInput aria-label="Запрос" />
                <Button type="button">Найти</Button>
              </SearchForm>
              <CallToday $tone="green">Перезвонить сегодня</CallToday>
            </TopBar>
            <Filters>
              {filters.map((f) => <li key={f}><a href="#">{f}</a></li>)}
              <li><a href="#">Вид<Caret /></a></li>
              <li><a href="#">Менеджер<Caret /></a></li>
            </Filters>
            <Toolbar id="per-page-top" />
            <Grid>
              <colgroup>{colWidths.map((w, i) => <Col key={i} $w={w} />)}</colgroup>
              <thead>
                <tr>
                  <th>№</th>
                  <th><HeadCheck aria-label="Выбрать все" /></th>
                  <SortHead><SortLabel>ID<SortIcon /></SortLabel></SortHead>
                  <th>Менеджер</th>
                  <th>Менеджер продаж</th>
                  <SortHead>Дата</SortHead>
                  <SortHead>ФИО</SortHead>
                  <SortHead>Телефон</SortHead>
                  <SortHead>Приедет</SortHead>
                  <SortHead>Модель</SortHead>
                  <SortHead>Цена</SortHead>
                  <SortHead>Взнос</SortHead>
                  <th>Адрес</th>
                  <SortHead>Вид</SortHead>
                  <SortHead>Статус</SortHead>
                  <th>СМС</th>
                  <th>Правка</th>
                </tr>
              </thead>
              <tbody>
                {shown.map((lead, i) => <LeadRow key={i} lead={lead} cut={i === 11} seed={i} />)}
              </tbody>
            </Grid>
            <Toolbar id="per-page-bottom" />
          </Content>
          <Footer>
            <a href="#">Заявки</a> <a href="#">Звонки</a>
            <Counter />
          </Footer>

          <ChatHandle aria-label="Чат"><span>Ч</span><span>А</span><span>Т</span></ChatHandle>
          <Chat>
            <ChatTitle htmlFor="recipients">Адресаты</ChatTitle>
            <ChatBody>
              <Recipients>
                <RecipientBox>
                  <RecipientList id="recipients" size={19} defaultValue="Не выбрано">
                    {people.map((p) => <option key={p}>{p}</option>)}
                  </RecipientList>
                  <Scrollbar $w={15} $h={260}>
                    <Arrow $up />
                    <Thumb $h={172} />
                    <Arrow />
                  </Scrollbar>
                </RecipientBox>
              </Recipients>
              <Messages />
            </ChatBody>
            <Compose>
              <textarea aria-label="Сообщение" />
              <Send>Отправить</Send>
            </Compose>
          </Chat>
        </Page>
        <PageScrollbar $w={17} $h={678}>
          <Arrow $up />
          <Thumb $h={350} />
          <Arrow />
        </PageScrollbar>
      </Viewport>
    </>
  );
}
